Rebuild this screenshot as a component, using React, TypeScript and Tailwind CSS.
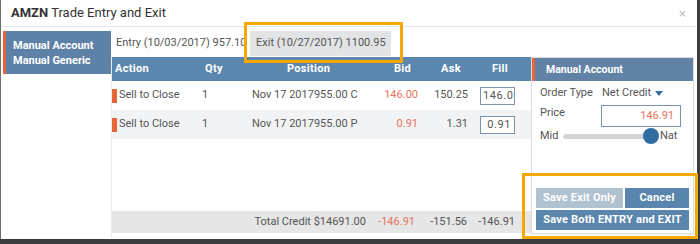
import React from 'react'

const ROWS = [
  { action: 'Sell to Close', qty: '1', position: 'Nov 17 2017955.00 C', bid: '146.00', ask: '150.25', fill: '146.00', shade: false },
  { action: 'Sell to Close', qty: '1', position: 'Nov 17 2017955.00 P', bid: '0.91', ask: '1.31', fill: '0.91', shade: true },
]

export default function App() {
  return (
    <div className="h-[244px] w-[700px] overflow-hidden bg-[#3a3c3e] font-['Roboto',sans-serif] text-[#555]">
      <div className="relative h-[239px] w-[697px] border-l border-[#6b6d70] bg-white">
        {/* Title bar */}
        <div className="flex h-[27px] items-center justify-between border-b border-[#e6e6e6] pl-[10px] pr-[11px]">
          <div className="text-[13px] text-[#333]">
            <span className="font-bold">AMZN</span> Trade Entry and Exit
          </div>
          <span className="text-[13px] leading-none text-[#c4c4c4]">×</span>
        </div>

        <div className="flex h-[211px]">
          {/* Sidebar */}
          <div className="w-[110px] pl-[2px] pt-[4px]">
            <div className="flex h-[43px] flex-col justify-center border-l-[3px] border-[#e8653a] bg-[#5e82a7] pl-[7px] text-[11px] font-bold leading-[15px] text-white">
              <div>Manual Account</div>
              <div>Manual Generic</div>
            </div>
          </div>

          {/* Main */}
          <div className="flex w-[586px] flex-col">
            {/* Tabs */}
            <div className="mt-[4px] flex h-[25px] items-center text-[11px]">
              <div className="flex h-full w-[139px] items-center overflow-hidden whitespace-nowrap pl-[5px]">Entry (10/03/2017) 957.10</div>
              <div className="flex h-full w-[141px] items-center bg-[#e1e3e4] pl-[6px]">Exit (10/27/2017) 1100.95</div>
            </div>

            <div className="mt-[1px] flex flex-1">
              {/* Table */}
              <div className="flex w-[420px] flex-col border-l border-[#ececec]">
                <div className="grid h-[24px] grid-cols-[90px_82px_107px_47px_51px_1fr] items-center bg-[#5b87ae] pl-[3px] text-[11px] font-bold tracking-[0.3px] text-white">
                  <div>Action</div>
                  <div>Qty</div>
                  <div>Position</div>
                  <div>Bid</div>
                  <div>Ask</div>
                  <div>Fill</div>
                </div>
                {ROWS.map((r, i) => (
                  <div
                    key={i}
                    className={`flex h-[29px] items-center text-[11px] ${r.shade ? 'bg-[#f2f3f5]' : 'bg-white'}`}
                  >
                    <span className="mr-[2px] h-[14px] w-[5px] bg-[#e8653a]" />
                    <div className="w-[83px]">{r.action}</div>
                    <div className="w-[50px]">{r.qty}</div>
                    <div className="w-[128px] whitespace-nowrap">{r.position}</div>
                    <div className="w-[38px] text-right text-[#e8735a]">{r.bid}</div>
                    <div className="w-[50px] text-right">{r.ask}</div>
                    <div className="flex w-[47px] justify-end">
                      <div className="h-[18px] w-[35px] overflow-hidden whitespace-nowrap border border-[#7a93ac] bg-white pl-[2px] pr-[3px] text-right leading-[16px] tracking-[0.6px]">
                        {r.fill}
                      </div>
                    </div>
                  </div>
                ))}
                <div className="flex-1" />
                <div className="mb-[5px] flex h-[22px] items-center bg-[#e6e6e6] text-[11px]">
                  <div className="w-[254px] text-right">Total Credit $14691.00</div>
                  <div className="w-[49px] text-right text-[#e8735a]">-146.91</div>
                  <div className="w-[52px] text-right">-151.56</div>
                  <div className="w-[48px] text-right">-146.91</div>
                </div>
              </div>

              {/* Right panel */}
              <div className="mb-[4px] flex w-[163px] flex-col border border-[#dcdcdc] text-[11px]">
                <div className="flex h-[23px] items-center border-l-[3px] border-[#e8653a] bg-[#6282a6] pl-[11px] text-[10.5px] font-bold text-white">
                  Manual Account
                </div>
                <div className="flex flex-col px-[8px] pt-[3px]">
                  <div className="flex h-[18px] items-center">
                    <span className="w-[62px]">Order Type</span>
                    <span className="flex items-center gap-[4px]">
                      Net Credit
                      <svg width="8" height="5" viewBox="0 0 8 5"><path d="M0 0h8L4 5z" fill="#2f6da3" /></svg>
                    </span>
                  </div>
                  <div className="mt-[3px] flex h-[22px] items-start justify-between">
                    <span>Price</span>
                    <div className="mr-[4px] flex h-[22px] w-[80px] items-center justify-end border border-[#7a93ac] pr-[6px] text-[#e8735a]">146.91</div>
                  </div>
                  <div className="mt-[1px] flex h-[16px] items-center">
                    <span className="w-[23px]">Mid</span>
                    <div className="relative h-[5px] w-[92px] rounded-full bg-[#d4d4d4]">
                      <span className="absolute right-[-4px] top-[-6px] h-[16px] w-[16px] rounded-full bg-[#2f6da3]" />
                    </div>
                    <span className="ml-[5px]">Nat</span>
                  </div>
                </div>
                <div className="flex-1" />
                <div className="flex flex-col gap-[2px] px-[4px] pb-[3px] text-[11px] font-bold tracking-[0.2px] text-white">
                  <div className="flex gap-[2px]">
                    <div className="flex h-[20px] w-[87px] items-center justify-center bg-[#b0c1cf]">Save Exit Only</div>
                    <div className="flex h-[20px] flex-1 items-center justify-center bg-[#5a86ad]">Cancel</div>
                  </div>
                  <div className="flex h-[20px] items-center justify-center bg-[#5a86ad]">Save Both ENTRY and EXIT</div>
                </div>
              </div>
            </div>
          </div>
        </div>

        {/* Highlight callouts */}
        <div className="pointer-events-none absolute left-[243px] top-[22px] h-[41px] w-[159px] border-[3px] border-[#f6a800]" />
        <div className="pointer-events-none absolute left-[521px] top-[173px] h-[66px] w-[176px] border-[3px] border-[#f6a800]" />
      </div>
    </div>
  )
}
